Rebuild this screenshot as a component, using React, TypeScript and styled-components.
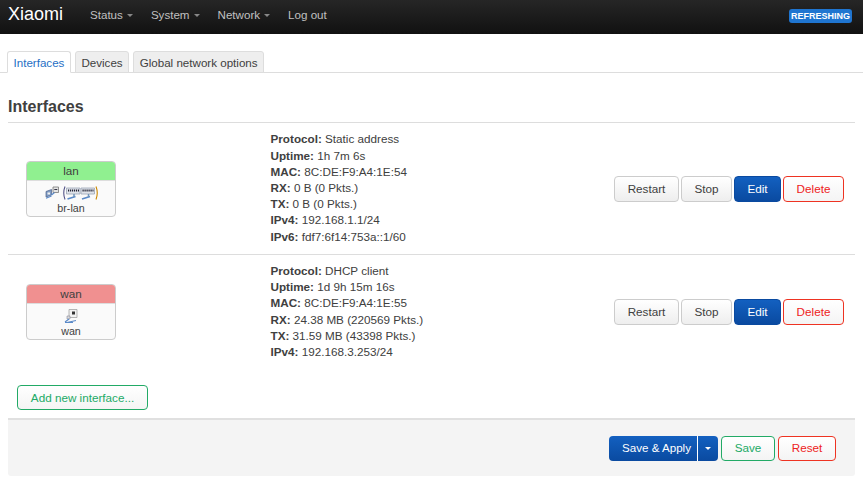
import React from "react";
import styled, { createGlobalStyle } from "styled-components";

const Global = createGlobalStyle`
  html, body { margin: 0; padding: 0; background: #fff; }
  body { font-family: "Liberation Sans", Arial, sans-serif; font-size: 11.7px; color: #404040; line-height: 16px; }
`;
const Page = styled.div`width: 863px; height: 483px; overflow: hidden;`;
const Header = styled.header`
  height: 34px; display: flex; align-items: center; padding: 0 11px 0 8px;
  background: linear-gradient(#262626, #111);
`;
const Brand = styled.a`font-size: 18px; line-height: 28px; color: #fff; width: 82px; margin-top: -6px;`;
const Nav = styled.nav`display: flex; gap: 18px; flex: 1; margin-top: -4px;`;
const NavItem = styled.a`color: #c0c0c0; font-size: 11.6px; display: flex; align-items: center; gap: 4px;`;
const Caret = styled.span<{ $light?: boolean }>`
  display: inline-block; width: 0; height: 0; margin-top: 1px;
  border-left: 3px solid transparent; border-right: 3px solid transparent;
  border-top: 3px solid ${p => (p.$light ? "#fff" : "#888")};
`;
const Badge = styled.span`
  background: #1f75d0; color: #fff; font-size: 9px; font-weight: bold; line-height: 14px;
  padding: 0 2px; border-radius: 3px; margin: -2px 0 0 0; height: 14px;
`;
const Main = styled.main`padding: 17px 8px 0;`;
const Tabs = styled.div`
  display: flex; gap: 4px; height: 21px; margin: 0 -8px; padding: 0 0 0 7px; border-bottom: 1px solid #ddd;
`;
const Tab = styled.a<{ $active?: boolean }>`
  height: 22px; line-height: 22px; padding: 0 5.5px; font-size: 11.6px; box-sizing: border-box;
  border: 1px solid #ddd; border-radius: 3px 3px 0 0;
  ${p => p.$active
    ? "background:#fff; color:#1f6fc5; border-bottom-color:#fff;"
    : "background:#eee; color:#404040; border-bottom-color:#ddd;"}
`;
const Title = styled.h2`
  margin: 24px 0 0; font-size: 16px; line-height: 20px; font-weight: bold; height: 25px;
  color: #404040; border-bottom: 1px solid #ddd;
`;
const Row = styled.div<{ $h: number; $last?: boolean }>`
  display: flex; align-items: center; height: ${p => p.$h}px; box-sizing: border-box;
  ${p => (p.$last ? "" : "border-bottom: 1px solid #ddd;")}
`;
const IfaceCell = styled.div`width: 262.5px; padding-left: 18px; box-sizing: border-box;`;
const IfaceBox = styled.div`
  width: 90px; height: 56px; border: 1px solid #ccc; border-radius: 4px; overflow: hidden; background: #fafafa;
  text-align: center; box-sizing: border-box;
`;
const IfaceHead = styled.div<{ $color: string }>`
  background: ${p => p.$color}; height: 19px; line-height: 18px; font-size: 11.7px; color: #404040;
  border-bottom: 1px solid #ddd; box-sizing: border-box;
`;
const IfaceBody = styled.div`padding-top: 3px; font-size: 10.7px; line-height: 14px;`;
const IconRow = styled.div`height: 16px; display: flex; justify-content: center; align-items: center; gap: 4px; margin-top: 1px;`;
const Details = styled.div<{ $top: number }>`
  flex: 1; font-size: 11.7px; line-height: 16.2px; color: #404040; align-self: flex-start; padding-top: ${p => p.$top}px;
`;
const Label = styled.b`font-weight: bold;`;
const Actions = styled.div`display: flex; gap: 2px; margin-right: 11px;`;
const Btn = styled.button<{ $kind?: string; $w: number; $h?: number }>`
  font-family: inherit; font-size: 11.7px; height: ${p => p.$h ?? 26}px; width: ${p => p.$w}px;
  padding: 0 0 1px; border-radius: 4px; box-sizing: border-box; cursor: pointer;
  ${p => {
    switch (p.$kind) {
      case "primary": return "background:linear-gradient(#1360c0,#0a4aa0);border:1px solid #0a4aa0;color:#fff;";
      case "danger": return "background:linear-gradient(#fff,#f4f4f4);border:1px solid #ee3322;color:#ee2222;";
      case "success": return "background:linear-gradient(#fff,#f4f4f4);border:1px solid #22aa66;color:#22aa66;";
      default: return "background:linear-gradient(#fff,#eee);border:1px solid #ccc;color:#404040;";
    }
  }}
`;
const AddRow = styled.div`padding: 16px 0 0 9px; height: 49px; box-sizing: border-box;`;
const Footer = styled.div`
  height: 58px; background: #f4f4f4; border-top: 2px solid #e0e0e0; border-radius: 0 0 3px 3px;
  display: flex; justify-content: flex-end; align-items: center; gap: 3px; padding: 0 19px 0 0; box-sizing: border-box;
`;
const Split = styled.div`
  display: flex; width: 109px; height: 25px; border-radius: 4px; overflow: hidden;
  background: linear-gradient(#1360c0,#0a4aa0); color: #fff; font-size: 11.6px; align-items: center;
`;
const SplitMain = styled.span`
  width: 89px; text-align: center; height: 100%; line-height: 23px; padding-left: 7px;
  border-right: 1px solid #fff; box-sizing: border-box;
`;
const SplitCaret = styled.span`flex: 1; display: flex; justify-content: center;`;

const Switch = () => (
  <svg width="14" height="13" viewBox="0 0 14 13">
    <path d="M1 5.500l5.500-2v5.500l-5.500 2z" fill="#7f9cc4" stroke="#4a5f88" strokeWidth=".7" />
    <path d="M8 1h5.500v5.500H8z" fill="#e4e4e4" stroke="#777" strokeWidth=".8" />
    <path d="M9.300 3.500h3" stroke="#334" strokeWidth="1.200" />
    <path d="M2.500 6.500h2.500v2H2.500z" fill="#f0f0f0" />
    <path d="M1 12.300l5.500-2.300M6.500 9l3-2.500" stroke="#5b8ac8" strokeWidth="1.200" />
  </svg>
);
const Bridge = () => (
  <svg width="35" height="14" viewBox="0 0 35 14">
    <path d="M2 .5Q-.500 7 2 13.500" stroke="#558" fill="none" strokeWidth="1.100" />
    <path d="M33 .5Q35.500 7 33 13.500" stroke="#c80" fill="none" strokeWidth="1.100" />
    <path d="M3.500 2h13.500v6H3.500zM18 2h13.500v6H18z" fill="#dfe3ea" stroke="#9aa3b5" strokeWidth=".8" />
    <path d="M5 4.500h11M19.500 4.500h11" stroke="#223" strokeWidth="1.800" strokeDasharray="1.200 .8" />
    <path d="M4.500 13l8-2.500M19 13l8-2.500" stroke="#5b8ac8" strokeWidth="1.700" />
    <path d="M11 8v3M25.500 8v3" stroke="#6f93b8" strokeWidth="1.500" />
  </svg>
);
const Wan = () => (
  <svg width="14" height="14" viewBox="0 0 14 14">
    <path d="M5 .5h8v8H5z" fill="#f2f2f2" stroke="#999" strokeWidth=".7" />
    <path d="M8 2.500h3v3H8z" fill="#333" />
    <path d="M3 7h3v3H3z" fill="#ddd" stroke="#778" strokeWidth=".5" />
    <path d="M1 13l4-3M3 13.500l9-2M1 13.500h8" stroke="#5b8ac8" strokeWidth="1.100" />
  </svg>
);

type Line = [string, string];
const lan: Line[] = [
  ["Protocol:", "Static address"], ["Uptime:", "1h 7m 6s"], ["MAC:", "8C:DE:F9:A4:1E:54"],
  ["RX:", "0 B (0 Pkts.)"], ["TX:", "0 B (0 Pkts.)"], ["IPv4:", "192.168.1.1/24"], ["IPv6:", "fdf7:6f14:753a::1/60"],
];
const wan: Line[] = [
  ["Protocol:", "DHCP client"], ["Uptime:", "1d 9h 15m 16s"], ["MAC:", "8C:DE:F9:A4:1E:55"],
  ["RX:", "24.38 MB (220569 Pkts.)"], ["TX:", "31.59 MB (43398 Pkts.)"], ["IPv4:", "192.168.3.253/24"],
];

const ActionButtons = () => (
  <Actions>
    <Btn $w={65}>Restart</Btn>
    <Btn $w={51}>Stop</Btn>
    <Btn $w={47} $kind="primary">Edit</Btn>
    <Btn $w={61} $kind="danger">Delete</Btn>
  </Actions>
);
const Info = ({ lines, top }: { lines: Line[]; top: number }) => (
  <Details $top={top}>
    {lines.map(([k, v]) => (
      <div key={k}><Label>{k}</Label> {v}</div>
    ))}
  </Details>
);

export default function App() {
  return (
    <Page>
      <Global />
      <Header>
        <Brand>Xiaomi</Brand>
        <Nav>
          <NavItem>Status <Caret /></NavItem>
          <NavItem>System <Caret /></NavItem>
          <NavItem>Network <Caret /></NavItem>
          <NavItem>Log out</NavItem>
        </Nav>
        <Badge>REFRESHING</Badge>
      </Header>
      <Main>
        <Tabs>
          <Tab $active>Interfaces</Tab>
          <Tab>Devices</Tab>
          <Tab>Global network options</Tab>
        </Tabs>
        <Title>Interfaces</Title>
        <Row $h={132}>
          <IfaceCell>
            <IfaceBox>
              <IfaceHead $color="#90f090">lan</IfaceHead>
              <IfaceBody>
                <IconRow><Switch /><Bridge /></IconRow>
                br-lan
              </IfaceBody>
            </IfaceBox>
          </IfaceCell>
          <Info lines={lan} top={8.4} />
          <ActionButtons />
        </Row>
        <Row $h={114} $last>
          <IfaceCell>
            <IfaceBox>
              <IfaceHead $color="#f09090">wan</IfaceHead>
              <IfaceBody>
                <IconRow><Wan /></IconRow>
                wan
              </IfaceBody>
            </IfaceBox>
          </IfaceCell>
          <Info lines={wan} top={8} />
          <ActionButtons />
        </Row>
        <AddRow>
          <Btn $w={131} $h={25} $kind="success">Add new interface...</Btn>
        </AddRow>
        <Footer>
          <Split>
            <SplitMain>Save &amp; Apply</SplitMain>
            <SplitCaret><Caret $light /></SplitCaret>
          </Split>
          <Btn $w={54} $h={25} $kind="success">Save</Btn>
          <Btn $w={58} $h={25} $kind="danger">Reset</Btn>
        </Footer>
      </Main>
    </Page>
  );
}
